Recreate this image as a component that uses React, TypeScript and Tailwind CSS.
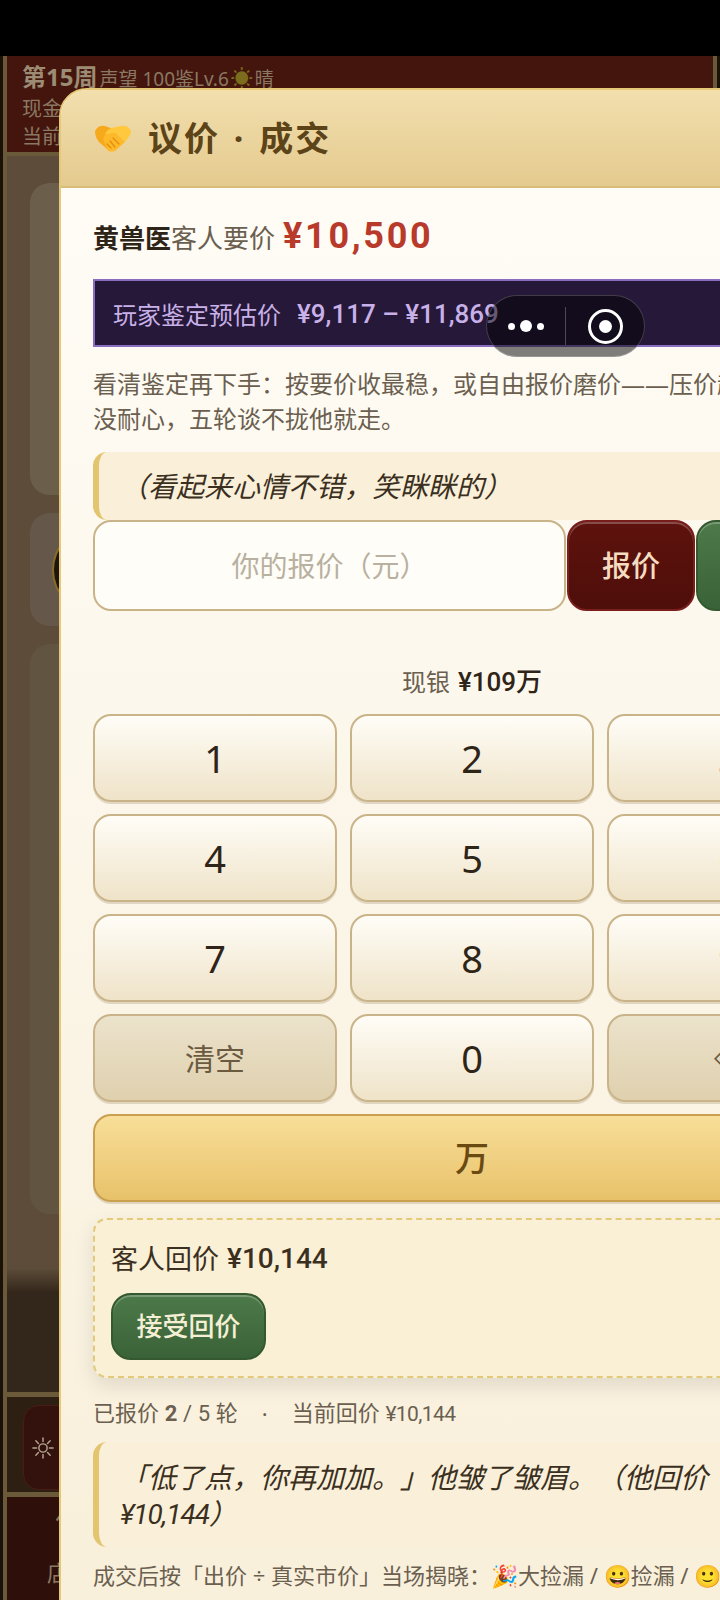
const FONT = "font-['Noto_Sans','Noto_Sans_CJK_SC',sans-serif]";
const NUM = "font-['Roboto','Noto_Sans_CJK_SC',sans-serif]";

const KEY =
  "h-[88px] rounded-[18px] border-2 border-[#c9b48a] bg-linear-to-b from-[#fffdf7] to-[#efe3c8] shadow-[0_2px_0_rgba(120,90,40,0.2)] text-[38px] font-[450] text-[#2e2418] flex items-center justify-center";
const KEY_GREY =
  "h-[88px] rounded-[18px] border-2 border-[#c9b48a] bg-linear-to-b from-[#ece3cc] to-[#dfd0ae] shadow-[0_2px_0_rgba(120,90,40,0.2)] text-[#6b5a40] flex items-center justify-center";

function Handshake() {
  return (
    <svg width="38" height="28" viewBox="0 0 38 28" className="shrink-0">
      <path d="M1 7Q4 1 11 2L19 5L22 13L17 27Q15 27 13 25L5 18Q1 13 1 7Z" fill="#f6a91b" />
      <path d="M37 7Q34 1 27 2L17 4Q13 6 11 10Q14 12 18 9L22 9L31 18L34 14Q37 11 37 7Z" fill="#ffc83d" />
      <path d="M14 27Q18 28 21 27L31 18L22 9L18 9Q14 12 11 10L9 15Z" fill="#fdb92a" />
      <path d="M13 20l4 4M16 17l5 6M19 14l6 6" stroke="#e08e0b" strokeWidth="1.3" strokeLinecap="round" fill="none" />
    </svg>
  );
}

function Backdrop() {
  return (
    <div className="flex flex-col h-[1544px] border-x-[3px] border-[#1a1208]">
      <div className="flex-1 flex flex-col min-h-0 border-x-4 border-[#6b5a3a]">
        {/* Top status */}
        <div className="h-[100px] shrink-0 bg-[#44150d] border-b-4 border-[#6b5a3a] pl-[15px] pt-[3px] text-[#8a7862]">
          <div className="flex items-baseline gap-[2px] whitespace-nowrap h-[36px]">
            <span className="text-[24px] font-bold text-[#9c8c74]">第15周</span>
            <span className="text-[19px]">声望 100鉴Lv.6</span>
            <span className="text-[22px] leading-none text-[#7c6d1c]">☀</span>
            <span className="text-[19px]">晴</span>
          </div>
          <div className="text-[20px] leading-[28px]">现金</div>
          <div className="text-[20px] leading-[28px]">当前</div>
        </div>
        {/* Main */}
        <div className="h-[1236px] shrink-0 bg-linear-to-b from-[#5c4c39] from-90% to-[#33261a] to-92% pl-[23px] pt-[27px] flex flex-col gap-[18px]">
          <div className="h-[312px] w-[200px] rounded-[20px] bg-[#6b5f4c]" />
          <div className="relative h-[113px] w-[200px] rounded-[20px] bg-[#65584a]">
            <div className="absolute left-[22px] top-[14px] h-[86px] w-[86px] rounded-full border-2 border-[#8a6a2a] bg-[#1d160c]" />
          </div>
          <div className="h-[570px] w-[200px] rounded-[20px] bg-[#615542]" />
        </div>
        {/* Tool row */}
        <div className="h-[105px] shrink-0 bg-[#2d2013] border-y-[5px] border-[#6b5a3a] pl-[16px] pt-[8px]">
          <div className="h-[85px] w-[200px] rounded-[16px] border border-[#4a1c14] bg-[#33120e] flex items-center pl-[8px] text-[#b3a58e]">
            <svg width="22" height="22" viewBox="0 0 24 24" fill="none" stroke="currentColor" strokeWidth="1.6" strokeLinecap="round">
              <circle cx="12" cy="12" r="4.5" />
              <path d="M12 1v4M12 19v4M1 12h4M19 12h4M4.2 4.2l2.8 2.8M17 17l2.8 2.8M4.2 19.8L7 17M17 7l2.8-2.8" />
            </svg>
          </div>
        </div>
        {/* Bottom nav */}
        <div className="flex-1 bg-[#2f0f0a] pl-[40px] pt-[8px] text-[#8a7862]">
          <div className="text-[26px] leading-[32px] pl-[8px]">价</div>
          <div className="text-[22px] leading-[30px] mt-[20px]">店铺</div>
        </div>
      </div>
    </div>
  );
}

function Quote({ children }: { children: React.ReactNode }) {
  return (
    <div className="rounded-[14px] border-l-[6px] border-[#e3c46f] bg-[#faf0d9] pl-[21px] pr-[16px] text-[28px] leading-[36px] italic text-[#3a2f20] whitespace-nowrap">
      {children}
    </div>
  );
}

export default function App() {
  return (
    <div className={`relative w-[720px] h-[1600px] overflow-hidden bg-black [text-spacing-trim:space-all] ${FONT}`}>
      <div className="h-[56px]" />
      <Backdrop />

      {/* Dialog */}
      <div className="absolute left-[59px] top-[88px] w-[826px] h-[1600px] rounded-t-[28px] border-2 border-[#e5c878] overflow-hidden bg-linear-to-b from-[#fffdf8] to-[#f9f0dc] to-90%">
        <div className="h-[98px] flex items-center pl-[33px] gap-[16px] bg-linear-to-b from-[#f2dfae] to-[#e4ca8e] border-b-2 border-[#d9bc78]">
          <Handshake />
          <span className="text-[34px] font-bold tracking-[2px] [word-spacing:3px] text-[#5c4318]">议价 · 成交</span>
        </div>

        <div className="px-[32px] pt-[21px]">
          <div className="h-[56px] flex items-baseline whitespace-nowrap text-[26px] text-[#6b5f50]">
            <span className="font-bold text-[#2e2418]">黄兽医</span>
            <span>客人要价</span>
            <span className={`ml-[8px] text-[36px] font-bold tracking-[2.7px] text-[#b83a2a] ${NUM}`}>¥10,500</span>
          </div>

          <div className="mt-[14px] h-[68px] border-2 border-[#8a6cc0] bg-[#261838] pl-[18px] pt-[3px] flex items-center whitespace-nowrap text-[#c8b0e8]">
            <span className="text-[24px]">玩家鉴定预估价</span>
            <span className={`ml-[16px] text-[26px] font-medium ${NUM}`}>¥9,117 – ¥11,869</span>
          </div>

          <p className="mt-[19px] text-[24px] leading-[35px] text-[#6b5f50] whitespace-nowrap">
            看清鉴定再下手：按要价收最稳，或自由报价磨价——压价越低客人越
            <br />
            没耐心，五轮谈不拢他就走。
          </p>

          <div className="mt-[16px]">
            <Quote>
              <div className="h-[68px] flex items-center">（看起来心情不错，笑眯眯的）</div>
            </Quote>
          </div>

          <div className="flex h-[91px] gap-[1px]">
            <div className="w-[473px] rounded-[18px] border-2 border-[#c9b48a] bg-[#fffdf7] flex items-center justify-center text-[28px] text-[#b8b0a0]">
              你的报价（元）
            </div>
            <div className="w-[128px] rounded-[20px] border-2 border-[#7a1d1d] bg-linear-to-b from-[#5e120d] to-[#4e0e0a] shadow-[inset_0_2px_0_rgba(255,255,255,0.25)] flex items-center justify-center text-[29px] font-medium text-[#f5dcc0]">
              报价
            </div>
            <div className="flex-1 rounded-[20px] border-2 border-[#35592f] bg-linear-to-b from-[#4d7a4a] to-[#3a6238] shadow-[inset_0_2px_0_rgba(255,255,255,0.25)] flex items-center justify-center text-[29px] font-medium text-[#f0efd0]">
              接受
            </div>
          </div>

          <div className="mt-[56px] h-[30px] flex items-center justify-center gap-[8px] text-[24px] text-[#6b5f50]">
            <span>现银</span>
            <span className={`text-[26px] font-medium text-[#2e2418] ${NUM}`}>¥109万</span>
          </div>

          <div className="mt-[17px] grid grid-cols-3 gap-x-[13px] gap-y-[12px]">
            {["1", "2", "3", "4", "5", "6", "7", "8", "9"].map((n) => (
              <div key={n} className={KEY}>{n}</div>
            ))}
            <div className={`${KEY_GREY} text-[30px]`}>清空</div>
            <div className={KEY}>0</div>
            <div className={`${KEY_GREY} text-[22px]`}>⌫</div>
          </div>

          <div className="mt-[12px] h-[88px] rounded-[18px] border-2 border-[#c9a050] bg-linear-to-b from-[#f8de98] to-[#e8c26a] shadow-[0_2px_0_rgba(120,90,40,0.2)] flex items-center justify-center text-[34px] font-medium text-[#6b4a12]">
            万
          </div>

          <div className="mt-[16px] h-[160px] rounded-[14px] border-2 border-dashed border-[#e3c97a] bg-[#faf0d6] shadow-[0_8px_20px_rgba(0,0,0,0.1)] pl-[16px] pt-[21px]">
            <div className="h-[36px] flex items-center gap-[8px] text-[27px] text-[#3a2f20]">
              <span>客人回价</span>
              <span className={`text-[28px] font-medium ${NUM}`}>¥10,144</span>
            </div>
            <div className="mt-[16px] w-[155px] h-[67px] rounded-[20px] border-2 border-[#35592f] bg-linear-to-b from-[#4d7a4a] to-[#3a6238] shadow-[inset_0_2px_0_rgba(255,255,255,0.25)] flex items-center justify-center text-[26px] font-medium text-[#f5f0d5]">
              接受回价
            </div>
          </div>

          <div className="mt-[18px] h-[34px] flex items-center whitespace-nowrap text-[22px] text-[#6b5f50]">
            <span>已报价 <b className={`font-bold ${NUM}`}>2</b> <span className={NUM}>/ 5</span> 轮</span>
            <span className="mx-[24px]">·</span>
            <span>当前回价 <span className={`text-[21px] tracking-[-0.6px] ${NUM}`}>¥10,144</span></span>
          </div>

          <div className="mt-[12px]">
            <Quote>
              <div className="pt-[16.5px] pb-[14.5px]">
                「低了点，你再加加。」他皱了皱眉。（他回价
                <br />
                <span className={`tracking-[-1px] ${NUM}`}>¥10,144</span>）
              </div>
            </Quote>
          </div>

          <p className="mt-[10px] text-[22px] leading-[36px] text-[#6b5f50] whitespace-nowrap">
            成交后按「出价 ÷ 真实市价」当场揭晓：🎉大捡漏 / 😀捡漏 / 🙂公道 /
            <br />
            😅 溢价上当 · 买贵别 · 打眼 / 🥶大上当
          </p>
        </div>
      </div>

      {/* Capsule */}
      <div className="absolute left-[486px] top-[295px] w-[159px] h-[62px] rounded-full border border-white/20 bg-black/50 flex items-center">
        <div className="flex-1 flex items-center justify-center gap-[5px] text-white">
          <span className="w-[7px] h-[7px] rounded-full bg-white" />
          <span className="w-[12px] h-[12px] rounded-full bg-white" />
          <span className="w-[7px] h-[7px] rounded-full bg-white" />
        </div>
        <div className="w-px h-[38px] bg-white/25" />
        <div className="flex-1 flex items-center justify-center">
          <div className="w-[35px] h-[35px] rounded-full border-[3px] border-white flex items-center justify-center">
            <span className="w-[13px] h-[13px] rounded-full bg-white" />
          </div>
        </div>
      </div>
    </div>
  );
}
